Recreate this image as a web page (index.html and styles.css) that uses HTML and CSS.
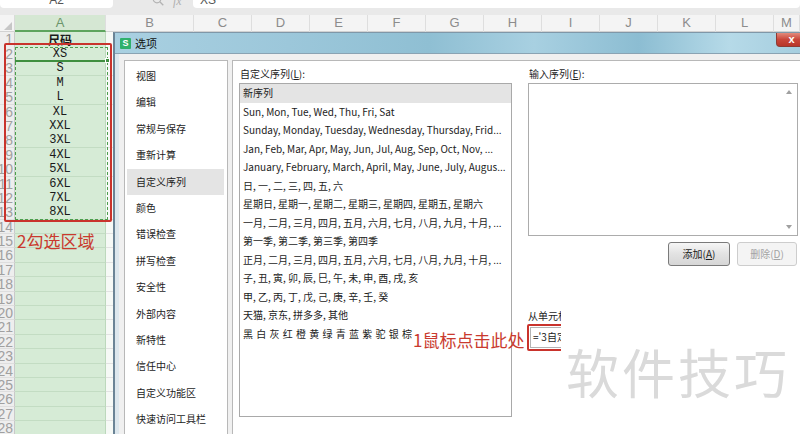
FILE: index.html
```html
<!DOCTYPE html>
<html lang="zh-CN">
<head>
<meta charset="utf-8">
<title>选项</title>
<link rel="stylesheet" href="styles.css">
</head>
<body>
<div class="app">
  <div class="topbar">
    <div class="namebox">A2</div>
    <div class="tools">
      <svg class="search" width="12" height="12" viewBox="0 0 12 12"><circle cx="5" cy="4" r="3.8" fill="none" stroke="#b3b3b3" stroke-width="1.2"/><path d="M7.8 6.8l3.5 3.5" stroke="#b3b3b3" stroke-width="1.3"/></svg>
      <span class="fx">fx</span>
    </div>
    <div class="formula">XS</div>
  </div>

  <div class="sheet">
    <div class="colhead">
      <div class="corner"><svg width="8" height="8" viewBox="0 0 8 8"><path d="M8 0V8H0Z" fill="#c6c6c6"/></svg></div>
      <div class="ch ch-a">A</div>
      <div class="ch ch-b">B</div>
      <div class="ch">C</div>
      <div class="ch">D</div>
      <div class="ch">E</div>
      <div class="ch">F</div>
      <div class="ch">G</div>
      <div class="ch">H</div>
      <div class="ch">I</div>
      <div class="ch">J</div>
      <div class="ch">K</div>
      <div class="ch">L</div>
      <div class="ch ch-m">M</div>
    </div>
    <div class="rows">
      <div class="row r1"><div class="rn">1</div><div class="ca head">尺码</div><div class="cb"></div></div>
      <div class="row"><div class="rn">2</div><div class="ca">XS</div><div class="cb"></div></div>
      <div class="row"><div class="rn">3</div><div class="ca">S</div><div class="cb"></div></div>
      <div class="row"><div class="rn">4</div><div class="ca">M</div><div class="cb"></div></div>
      <div class="row"><div class="rn">5</div><div class="ca">L</div><div class="cb"></div></div>
      <div class="row"><div class="rn">6</div><div class="ca">XL</div><div class="cb"></div></div>
      <div class="row"><div class="rn">7</div><div class="ca">XXL</div><div class="cb"></div></div>
      <div class="row"><div class="rn">8</div><div class="ca">3XL</div><div class="cb"></div></div>
      <div class="row"><div class="rn">9</div><div class="ca">4XL</div><div class="cb"></div></div>
      <div class="row"><div class="rn">10</div><div class="ca">5XL</div><div class="cb"></div></div>
      <div class="row"><div class="rn">11</div><div class="ca">6XL</div><div class="cb"></div></div>
      <div class="row"><div class="rn">12</div><div class="ca">7XL</div><div class="cb"></div></div>
      <div class="row"><div class="rn">13</div><div class="ca">8XL</div><div class="cb"></div></div>
      <div class="row"><div class="rn">14</div><div class="ca"></div><div class="cb"></div></div>
      <div class="row"><div class="rn">15</div><div class="ca"></div><div class="cb"></div></div>
      <div class="row"><div class="rn">16</div><div class="ca"></div><div class="cb"></div></div>
      <div class="row"><div class="rn">17</div><div class="ca"></div><div class="cb"></div></div>
      <div class="row"><div class="rn">18</div><div class="ca"></div><div class="cb"></div></div>
      <div class="row"><div class="rn">19</div><div class="ca"></div><div class="cb"></div></div>
      <div class="row"><div class="rn">20</div><div class="ca"></div><div class="cb"></div></div>
      <div class="row"><div class="rn">21</div><div class="ca"></div><div class="cb"></div></div>
      <div class="row"><div class="rn">22</div><div class="ca"></div><div class="cb"></div></div>
      <div class="row"><div class="rn">23</div><div class="ca"></div><div class="cb"></div></div>
      <div class="row"><div class="rn">24</div><div class="ca"></div><div class="cb"></div></div>
      <div class="row"><div class="rn">25</div><div class="ca"></div><div class="cb"></div></div>
      <div class="row"><div class="rn">26</div><div class="ca"></div><div class="cb"></div></div>
      <div class="row"><div class="rn">27</div><div class="ca"></div><div class="cb"></div></div>
      <div class="row"><div class="rn">28</div><div class="ca"></div><div class="cb"></div></div>
    </div>
  </div>

  <div class="sel-dash"></div>
  <div class="active-cell"><span class="handle"></span></div>
  <div class="sel-red"></div>
  <div class="note note2">2勾选区域</div>

  <div class="dialog">
    <div class="titlebar">
      <span class="logo">S</span>
      <span class="title">选项</span>
      <span class="close">x</span>
    </div>
    <div class="body">
      <ul class="nav">
        <li>视图</li>
        <li>编辑</li>
        <li>常规与保存</li>
        <li>重新计算</li>
        <li class="on">自定义序列</li>
        <li>颜色</li>
        <li>错误检查</li>
        <li>拼写检查</li>
        <li>安全性</li>
        <li>外部内容</li>
        <li>新特性</li>
        <li>信任中心</li>
        <li>自定义功能区</li>
        <li>快速访问工具栏</li>
      </ul>
      <div class="panel">
        <div class="col-list">
          <div class="label">自定义序列(<u>L</u>):</div>
          <ul class="listbox">
            <li class="on">新序列</li>
            <li>Sun, Mon, Tue, Wed, Thu, Fri, Sat</li>
            <li>Sunday, Monday, Tuesday, Wednesday, Thursday, Frid...</li>
            <li>Jan, Feb, Mar, Apr, May, Jun, Jul, Aug, Sep, Oct, Nov, ...</li>
            <li>January, February, March, April, May, June, July, Augus...</li>
            <li>日, 一, 二, 三, 四, 五, 六</li>
            <li>星期日, 星期一, 星期二, 星期三, 星期四, 星期五, 星期六</li>
            <li>一月, 二月, 三月, 四月, 五月, 六月, 七月, 八月, 九月, 十月, ...</li>
            <li>第一季, 第二季, 第三季, 第四季</li>
            <li>正月, 二月, 三月, 四月, 五月, 六月, 七月, 八月, 九月, 十月, ...</li>
            <li>子, 丑, 寅, 卯, 辰, 巳, 午, 未, 申, 酉, 戌, 亥</li>
            <li>甲, 乙, 丙, 丁, 戊, 己, 庚, 辛, 壬, 癸</li>
            <li>天猫, 京东, 拼多多, 其他</li>
            <li class="spaced">黑 白 灰 红 橙 黄 绿 青 蓝 紫 驼 银 棕</li>
          </ul>
        </div>
        <div class="col-input">
          <div class="label">输入序列(<u>E</u>):</div>
          <div class="textarea">
            <svg width="6" height="4" viewBox="0 0 6 4"><path d="M0 4L3 0L6 4Z" fill="#a0a0a0"/></svg>
            <svg width="6" height="4" viewBox="0 0 6 4"><path d="M0 0L3 4L6 0Z" fill="#a0a0a0"/></svg>
          </div>
          <div class="btnrow">
            <span class="btn">添加(<u>A</u>)</span>
            <span class="btn disabled">删除(<u>D</u>)</span>
          </div>
          <div class="import-clip">
            <div class="label import">从单元格导入序列(<u>I</u>):</div>
            <div class="redbox"><div class="cellref">='3自定义序列'!$A$2:$A$13</div></div>
          </div>
        </div>
      </div>
    </div>
  </div>

  <div class="note note1">1鼠标点击此处</div>
  <div class="watermark">软件技巧</div>
</div>
</body>
</html>
```

FILE: styles.css
```css
* { box-sizing: border-box; }
html, body { margin: 0; padding: 0; }
body {
  width: 800px;
  height: 434px;
  overflow: hidden;
  background: #ffffff;
  font-family: "Noto Sans CJK SC", "Liberation Sans", sans-serif;
}
.app {
  position: relative;
  width: 800px;
  height: 434px;
  overflow: hidden;
  background: #ececec;
}

/* formula bar */
.topbar {
  height: 15px;
  display: flex;
  background: #e9e9e9;
}
.namebox, .formula {
  margin-top: -8px;
  height: 16px;
  background: #fff;
  border-radius: 0 0 4px 4px;
  font-family: "Liberation Sans", sans-serif;
  font-size: 12px;
  line-height: 16px;
  color: #555;
}
.namebox {
  width: 113px;
  text-align: center;
}
.tools {
  width: 80px;
  display: flex;
  align-items: flex-start;
  gap: 9px;
  padding-left: 39px;
  margin-top: -5px;
}
.fx {
  font-family: "Liberation Serif", serif;
  font-style: italic;
  font-size: 12px;
  color: #b0b0b0;
  line-height: 12px;
}
.formula {
  flex: 1;
  padding-left: 7px;
}

/* sheet */
.sheet { background: #fff; }
.colhead {
  height: 17px;
  display: grid;
  grid-template-columns: 15px 91px 88px repeat(10, 58px) 1fr;
  background: #f4f4f4;
  border-bottom: 1px solid #d2d2d2;
  font-family: "Liberation Sans", sans-serif;
  font-size: 13px;
  color: #8c8c8c;
}
.corner {
  display: flex;
  align-items: flex-end;
  justify-content: flex-end;
  padding: 0 2px 2px 0;
  border-right: 1px solid #dadada;
}
.ch {
  text-align: center;
  line-height: 16px;
  border-right: 1px solid #dedede;
}
.ch-a {
  background: #d5e7d3;
  color: #6b956b;
  border-bottom: 2px solid #5da45d;
  line-height: 15px;
}
.rows { display: flex; flex-direction: column; }
.row {
  display: grid;
  grid-template-columns: 15px 91px 1fr;
  height: 14.4px;
}
.row.r1 { height: 15px; }
.rn {
  background: #eeeeee;
  color: #a0a0a0;
  font-family: "Liberation Sans", sans-serif;
  font-size: 14px;
  line-height: 14px;
  text-align: right;
  padding-right: 1px;
  overflow: hidden;
  white-space: nowrap;
  direction: rtl;
  border-right: 1px solid #c9c9c9;
  border-bottom: 1px solid #dedede;
}
.ca {
  background: #d6ebd6;
  border-right: 1px solid #bcd8bc;
  border-bottom: 1px solid #c3dcc3;
  font-family: "Liberation Mono", monospace;
  font-size: 12px;
  line-height: 14px;
  color: #1a1a1a;
  text-align: center;
}
.ca.head {
  font-family: "Noto Sans CJK SC", sans-serif;
  font-weight: bold;
  font-size: 12px;
  line-height: 15px;
}
.cb {
  background: #f6f9f6;
  border-bottom: 1px solid #e2e2e2;
}

/* selection annotations */
.sel-dash {
  position: absolute;
  left: 15px;
  top: 47px;
  width: 93px;
  height: 173px;
  border: 1.5px dashed #4d9f4d;
}
.active-cell {
  position: absolute;
  left: 15px;
  top: 60px;
  width: 93px;
  height: 2px;
  background: #3f8f3f;
}
.handle {
  position: absolute;
  right: -2px;
  top: -2px;
  width: 5px;
  height: 5px;
  background: #3f8f3f;
  border: 1px solid #fff;
}
.sel-red {
  position: absolute;
  left: 4px;
  top: 43px;
  width: 108px;
  height: 179px;
  border: 2.5px solid #c9332c;
  border-radius: 2px;
}
.note {
  position: absolute;
  color: #c93a2e;
  font-family: "Noto Sans CJK SC", sans-serif;
  font-size: 17px;
  line-height: 20px;
  white-space: nowrap;
}
.note2 { left: 17px; top: 231px; }
.note1 { left: 413px; top: 330px; }

/* dialog */
.dialog {
  position: absolute;
  left: 113px;
  top: 32px;
  width: 700px;
  height: 410px;
  border-left: 2px solid #6b8496;
  border-top: 1px solid #7f97a8;
  background: #dde7ed;
  display: flex;
  flex-direction: column;
  font-family: "Noto Sans CJK SC", sans-serif;
  font-size: 10px;
  color: #1c1c1c;
}
.titlebar {
  height: 21px;
  flex: none;
  display: flex;
  align-items: center;
  gap: 4px;
  padding-left: 5px;
  background: linear-gradient(90deg, #a9d0e1 0%, #9cc7da 25%, #8fbfd3 45%, #a8d0e1 60%, #8cbdd2 75%, #b6dae8 88%, #a2cbdd 100%);
  border-bottom: 1px solid #8aa3b3;
}
.logo {
  width: 11px;
  height: 11px;
  background: #2fb06c;
  color: #fff;
  font-family: "Liberation Sans", sans-serif;
  font-weight: bold;
  font-size: 9px;
  line-height: 11px;
  text-align: center;
  border-radius: 1px;
}
.title {
  font-size: 11px;
  color: #111;
  line-height: 14px;
}
.close {
  align-self: flex-start;
  margin-left: auto;
  margin-right: 6px;
  width: 31px;
  height: 14px;
  background: linear-gradient(#e38a7c, #c9463a 50%, #b8352a);
  border: 1px solid #8e3a33;
  border-top: none;
  border-radius: 0 0 4px 4px;
  color: #fff;
  font-family: "Liberation Sans", sans-serif;
  font-weight: bold;
  font-size: 11px;
  line-height: 12px;
  text-align: center;
}
.body {
  flex: 1;
  display: flex;
  gap: 4px;
  margin-left: 4px;
  padding: 6px 0 0 5px;
  background: #f0f0f0;
}
.nav {
  list-style: none;
  margin: 0;
  padding: 2px 0 0 0;
  width: 104px;
  flex: none;
  background: #fff;
  border: 1px solid #b8b8b8;
}
.nav li {
  height: 26.4px;
  line-height: 26.4px;
  margin: 0 3px 0 2px;
  padding-left: 9px;
  white-space: nowrap;
}
.nav li.on { background: #e4e4e4; }
.panel {
  flex: 1;
  display: flex;
  gap: 16px;
  padding: 6px 0 0 6px;
  background: #fff;
  border: 1px solid #b8b8b8;
}
.label {
  height: 16px;
  line-height: 14px;
  padding-left: 1px;
  white-space: nowrap;
}
.col-list { width: 273px; flex: none; }
.listbox {
  list-style: none;
  margin: 0;
  padding: 0;
  height: 334px;
  border: 1px solid #a9a9a9;
}
.listbox li {
  height: 18.5px;
  line-height: 18.5px;
  padding-left: 3px;
  white-space: nowrap;
  overflow: hidden;
}
.listbox li.on { background: #e4e4e4; }
.listbox li.spaced { word-spacing: 1px; }
.col-input {
  width: 270px;
  flex: none;
  display: flex;
  flex-direction: column;
}
.textarea {
  height: 153px;
  border: 1px solid #acacac;
  display: flex;
  flex-direction: column;
  justify-content: space-between;
  align-items: flex-end;
  padding: 6px 5px 6px 0;
}
.btnrow {
  margin-top: 6px;
  display: flex;
  justify-content: flex-end;
  gap: 7px;
  padding-right: 1px;
}
.btn {
  width: 62px;
  height: 24px;
  line-height: 22px;
  text-align: center;
  border: 1px solid #7a7a7a;
  border-radius: 3px;
  background: linear-gradient(#f6f6f6, #e2e2e2 50%, #d6d6d6);
  color: #1c1c1c;
}
.btn.disabled {
  width: 60px;
  border-color: #cdcdcd;
  background: #f4f4f4;
  color: #a3a3a3;
}
.import-clip {
  margin-top: 43px;
  margin-left: -2px;
  padding-left: 1px;
  width: 35px;
  overflow: hidden;
}
.label.import {
  height: 15px;
  line-height: 14px;
}
.redbox {
  width: 200px;
  height: 27px;
  border: 2.5px solid #c9332c;
  border-radius: 2px;
  padding: 1px;
}
.cellref {
  height: 100%;
  border: 1px solid #b4b4b4;
  padding-left: 2px;
  line-height: 18px;
  font-size: 10px;
  white-space: nowrap;
  overflow: hidden;
}

.watermark {
  position: absolute;
  left: 566px;
  top: 336px;
  font-family: "Noto Sans CJK SC", sans-serif;
  font-size: 53px;
  line-height: 70px;
  letter-spacing: 3px;
  color: #dadada;
  white-space: nowrap;
}
```
